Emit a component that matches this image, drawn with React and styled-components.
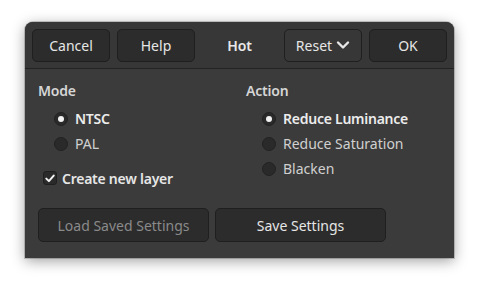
import React, { useState } from "react";
import styled, { createGlobalStyle } from "styled-components";

const GlobalStyle = createGlobalStyle`
  html, body {
    margin: 0;
    padding: 0;
    background: #ffffff;
  }
  body {
    font-family: "Noto Sans", "DejaVu Sans", sans-serif;
    font-size: 14px;
    -webkit-font-smoothing: antialiased;
  }
`;

const Page = styled.div`
  padding: 22px 25px;
  width: 429px;
`;

const Dialog = styled.div`
  width: 429px;
  height: 236px;
  background: #3b3b3b;
  border-radius: 8px 8px 0 0;
  box-shadow: 0 3px 14px rgba(0, 0, 0, 0.38), 0 0 0 1px rgba(0, 0, 0, 0.18);
  display: flex;
  flex-direction: column;
  overflow: hidden;
`;

const HeaderBar = styled.div`
  height: 47px;
  box-sizing: border-box;
  padding: 7px 7px;
  display: flex;
  align-items: center;
  gap: 7px;
  background: #373737;
  border-bottom: 1px solid #232323;
`;

const Button = styled.button`
  height: ${(p) => p.$h || 33}px;
  width: ${(p) => p.$w || 78}px;
  box-sizing: border-box;
  border-radius: 5px;
  border: 1px solid #1f1f1f;
  background: ${(p) => (p.$flat ? "#373737" : "#2c2c2c")};
  color: ${(p) => (p.disabled ? "#8a8a8a" : "#e6e6e6")};
  font-family: "Noto Sans", sans-serif;
  font-size: 14px;
  display: flex;
  align-items: center;
  justify-content: center;
  gap: 4px;
  padding: 0;
  cursor: pointer;
`;

const Title = styled.div`
  flex: 1;
  text-align: center;
  color: #e8e8e8;
  font-weight: 600;
  letter-spacing: -0.2px;
  font-size: 14px;
`;

const Body = styled.div`
  flex: 1;
  padding: 12px 13px 16px;
  display: flex;
  flex-direction: column;
`;

const Columns = styled.div`
  display: grid;
  grid-template-columns: 208px 200px;
`;

const Column = styled.div`
  display: flex;
  flex-direction: column;
`;

const Heading = styled.div`
  color: #d6d6d6;
  font-weight: 600;
  letter-spacing: -0.2px;
  height: 19px;
  line-height: 19px;
  margin-bottom: 6px;
`;

const RadioRow = styled.label`
  display: flex;
  align-items: center;
  gap: 7px;
  height: 25px;
  padding-left: 16px;
  color: ${(p) => (p.$on ? "#ececec" : "#d0d0d0")};
  font-weight: ${(p) => (p.$on ? 600 : 400)};
  letter-spacing: ${(p) => (p.$on ? "-0.25px" : "0")};
  cursor: pointer;
`;

const RadioDot = styled.span`
  width: 14px;
  height: 14px;
  box-sizing: border-box;
  border-radius: 50%;
  background: #2a2a2a;
  border: 1px solid #222;
  display: flex;
  align-items: center;
  justify-content: center;
  &::after {
    content: "";
    width: 6px;
    height: 6px;
    border-radius: 50%;
    background: ${(p) => (p.$on ? "#f2f2f2" : "transparent")};
  }
`;

const CheckRow = styled.label`
  display: flex;
  align-items: center;
  gap: 5px;
  height: 24px;
  margin-top: 10px;
  padding-left: 5px;
  color: #e6e6e6;
  font-weight: 600;
  letter-spacing: -0.25px;
  cursor: pointer;
`;

const CheckBox = styled.span`
  width: 14px;
  height: 14px;
  box-sizing: border-box;
  border-radius: 3px;
  background: #2a2a2a;
  border: 1px solid #1f1f1f;
  display: flex;
  align-items: center;
  justify-content: center;
`;

const Footer = styled.div`
  margin-top: auto;
  display: flex;
  gap: 6px;
`;

const Chevron = () => (
  <svg width="14" height="10" viewBox="0 0 14 10">
    <path d="M2 2.5 L7 7.5 L12 2.5" fill="none" stroke="#e6e6e6" strokeWidth="2.4" strokeLinecap="round" strokeLinejoin="round" />
  </svg>
);

const Tick = () => (
  <svg width="10" height="9" viewBox="0 0 10 9">
    <path d="M1.3 4.6 L3.9 7.1 L8.7 1.6" fill="none" stroke="#f2f2f2" strokeWidth="2" strokeLinecap="round" strokeLinejoin="round" />
  </svg>
);

const Radio = ({ on, label, onPick }) => (
  <RadioRow $on={on} onClick={onPick}>
    <RadioDot $on={on} />
    {label}
  </RadioRow>
);

export default function App() {
  const [mode, setMode] = useState("NTSC");
  const [action, setAction] = useState("Reduce Luminance");
  const [newLayer, setNewLayer] = useState(true);

  return (
    <>
      <GlobalStyle />
      <Page>
        <Dialog>
          <HeaderBar>
            <Button>Cancel</Button>
            <Button>Help</Button>
            <Title>Hot</Title>
            <Button $flat>
              Reset <Chevron />
            </Button>
            <Button>OK</Button>
          </HeaderBar>
          <Body>
            <Columns>
              <Column>
                <Heading>Mode</Heading>
                {["NTSC", "PAL"].map((m) => (
                  <Radio key={m} label={m} on={mode === m} onPick={() => setMode(m)} />
                ))}
                <CheckRow onClick={() => setNewLayer(!newLayer)}>
                  <CheckBox>{newLayer && <Tick />}</CheckBox>
                  Create new layer
                </CheckRow>
              </Column>
              <Column>
                <Heading>Action</Heading>
                {["Reduce Luminance", "Reduce Saturation", "Blacken"].map((a) => (
                  <Radio key={a} label={a} on={action === a} onPick={() => setAction(a)} />
                ))}
              </Column>
            </Columns>
            <Footer>
              <Button $w={171} $h={34} disabled>
                Load Saved Settings
              </Button>
              <Button $w={171} $h={34}>
                Save Settings
              </Button>
            </Footer>
          </Body>
        </Dialog>
      </Page>
    </>
  );
}
